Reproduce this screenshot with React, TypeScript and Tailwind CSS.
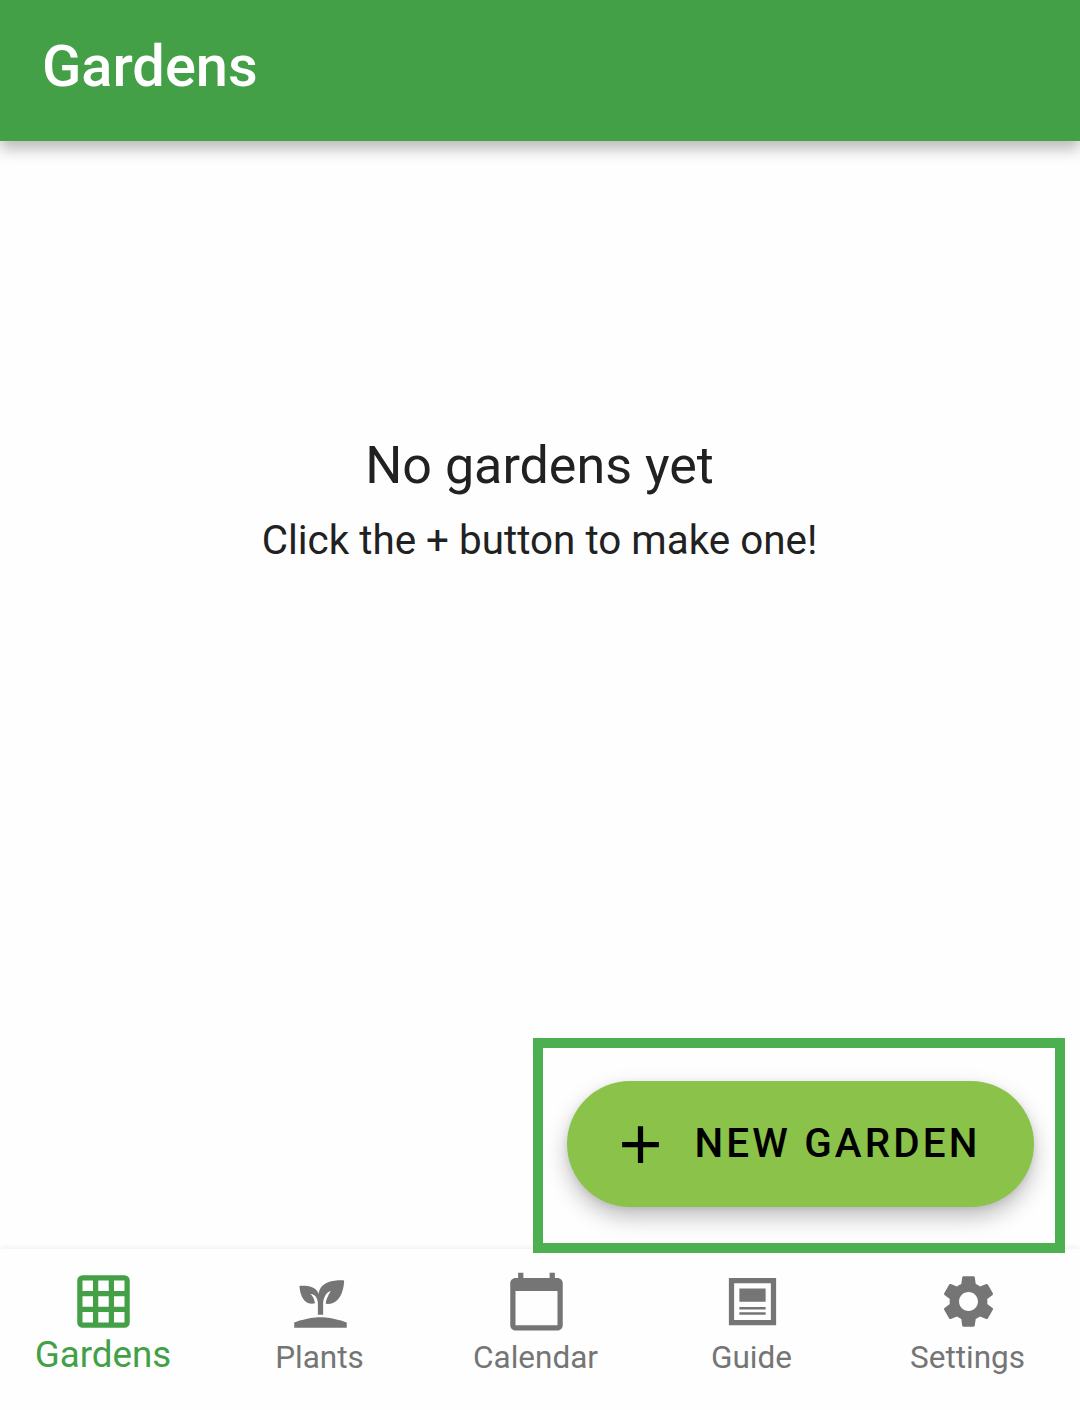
import React from "react";

const icons = {
  grid: "M10,4V8H14V4H10M16,4V8H20V4H16M16,10V14H20V10H16M16,16V20H20V16H16M14,20V16H10V20H14M8,20V16H4V20H8M8,14V10H4V14H8M8,8V4H4V8H8M10,14H14V10H10V14M4,2H20A2,2 0 0,1 22,4V20A2,2 0 0,1 20,22H4C2.92,22 2,21.1 2,20V4A2,2 0 0,1 4,2Z",
  sprout:
    "M2,22V20C2,20 7,18 12,18C17,18 22,20 22,20V22H2M11.3,9.1C10.1,5.2 4,6.1 4,6.1C4,6.1 4.2,13.9 9.9,12.7C9.5,9.8 8,9 8,9C10.8,9 11,12.4 11,12.4V17C11.3,17 11.7,17 12,17C12.3,17 12.7,17 13,17V12.8C13,12.8 13,8.9 16,7.9C16,7.9 14,10.9 14,12.9C21,13.6 21,4 21,4C21,4 12.1,3 11.3,9.1Z",
  calendar:
    "M20 3h-1V1h-2v2H7V1H5v2H4c-1.1 0-2 .9-2 2v16c0 1.1.9 2 2 2h16c1.1 0 2-.9 2-2V5c0-1.1-.9-2-2-2zm0 18H4V8h16v13z",
  guide: "M3 3H21V21H3ZM5 5V19H19V5ZM7 7H17V12.1H7ZM7 14.1H17V15H7ZM7 16.1H17V17H7Z",
  cog: "M19.14,12.94c0.04-0.3,0.06-0.61,0.06-0.94c0-0.32-0.02-0.64-0.07-0.94l2.03-1.58c0.18-0.14,0.23-0.41,0.12-0.61l-1.92-3.32c-0.12-0.22-0.37-0.29-0.59-0.22l-2.39,0.96c-0.5-0.38-1.03-0.7-1.62-0.94L14.4,2.81c-0.04-0.24-0.24-0.41-0.48-0.41h-3.84c-0.24,0-0.43,0.17-0.47,0.41L9.25,5.35C8.66,5.59,8.12,5.92,7.63,6.29L5.24,5.33c-0.22-0.08-0.47,0-0.59,0.22L2.74,8.87C2.62,9.08,2.66,9.34,2.86,9.48l2.03,1.58C4.84,11.36,4.8,11.69,4.8,12s0.02,0.64,0.07,0.94l-2.03,1.58c-0.18,0.14-0.23,0.41-0.12,0.61l1.92,3.32c0.12,0.22,0.37,0.29,0.59,0.22l2.39-0.96c0.5,0.38,1.03,0.7,1.62,0.94l0.36,2.54c0.05,0.24,0.24,0.41,0.48,0.41h3.84c0.24,0,0.44-0.17,0.47-0.41l0.36-2.54c0.59-0.24,1.13-0.56,1.62-0.94l2.39,0.96c0.22,0.08,0.47,0,0.59-0.22l1.92-3.32c0.12-0.22,0.07-0.47-0.12-0.61L19.14,12.94z M12,15.6c-1.98,0-3.6-1.62-3.6-3.6s1.62-3.6,3.6-3.6s3.6,1.62,3.6,3.6S13.98,15.6,12,15.6z",
  plus: "M19 13h-6v6h-2v-6H5v-2h6V5h2v6h6v2z",
};

const tabs: { label: string; icon: keyof typeof icons; active?: boolean }[] = [
  { label: "Gardens", icon: "grid", active: true },
  { label: "Plants", icon: "sprout" },
  { label: "Calendar", icon: "calendar" },
  { label: "Guide", icon: "guide" },
  { label: "Settings", icon: "cog" },
];

function Icon({ name }: { name: keyof typeof icons }) {
  return (
    <svg viewBox="0 0 24 24" className="size-[63px] shrink-0" fill="currentColor" fillRule="evenodd">
      <path d={icons[name]} />
    </svg>
  );
}

export default function App() {
  return (
    <div className="relative flex h-[1410px] w-[1080px] flex-col overflow-hidden bg-[#fefefe] font-['Roboto',sans-serif]">
      <header className="z-10 flex h-[141px] shrink-0 items-center bg-[#43a047] pb-[9px] pl-[42px] shadow-[0_8px_14px_rgba(0,0,0,0.27)]">
        <h1 className="text-[57.75px] leading-[68px] font-medium text-white">Gardens</h1>
      </header>

      <main className="flex flex-1 flex-col items-center pt-[295px] text-[#212121]">
        <h2 className="pr-px text-[52px] leading-[60px]">No gardens yet</h2>
        <p className="mt-[21px] pr-px text-[40.4px] leading-[48px]">Click the + button to make one!</p>
      </main>

      <nav className="flex h-[161px] shrink-0 bg-[#fefefe] shadow-[0_-2px_6px_rgba(0,0,0,0.05)]">
        {tabs.map((t) => (
          <button
            key={t.label}
            className={
              t.active
                ? "flex w-[216px] flex-col items-center pt-[20.75px] pr-[9px] text-[#43a047]"
                : "flex w-[216px] flex-col items-center pt-[20.75px] pr-[8px] text-[#757575]"
            }
          >
            <Icon name={t.icon} />
            <span
              className={
                t.active
                  ? "mt-[2px] pr-px text-[36.75px] leading-[40px]"
                  : "mt-[5px] pr-px text-[31.5px] leading-[40px]"
              }
            >
              {t.label}
            </span>
          </button>
        ))}
      </nav>

      <div className="absolute top-[1038px] left-[533px] z-20 flex h-[215px] w-[532px] justify-center border-[10px] border-[#4caf50] bg-[#fefefe] pt-[33px] pl-[3px]">
        <button className="flex h-[126px] w-[467px] items-center rounded-full bg-[#8bc34a] pl-[41.5px] text-black shadow-[0_10px_22px_rgba(0,0,0,0.25),0_2px_6px_rgba(0,0,0,0.08)]">
          <Icon name="plus" />
          <span className="ml-[23px] text-[40.4px] leading-[48px] font-medium tracking-[3.15px] whitespace-nowrap">
            NEW GARDEN
          </span>
        </button>
      </div>
    </div>
  );
}
